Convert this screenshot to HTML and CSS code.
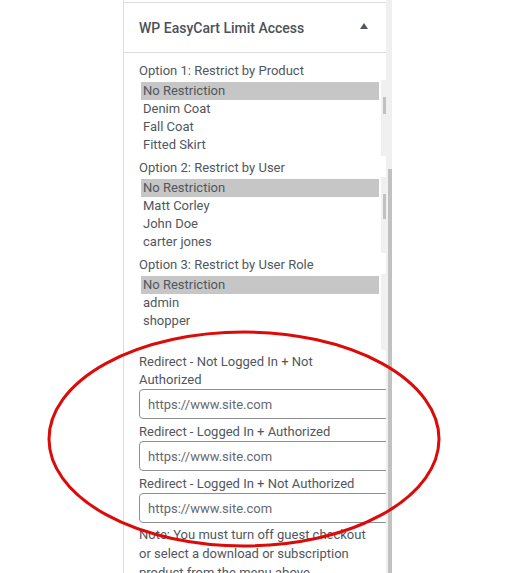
FILE: index.html
```html
<!DOCTYPE html>
<html lang="en">
<head>
<meta charset="utf-8">
<title>WP EasyCart Limit Access</title>
<link rel="stylesheet" href="styles.css">
</head>
<body>
<div class="page">
  <div class="gutter"></div>
  <section class="metabox">
    <header class="metabox-head">
      <h2 class="metabox-title">WP EasyCart Limit Access</h2>
      <span class="toggle-arrow"></span>
    </header>
    <div class="metabox-body">
      <div class="field-label">Option 1: Restrict by Product</div>
      <div class="listbox">
        <ul class="options">
          <li class="selected">No Restriction</li>
          <li>Denim Coat</li>
          <li>Fall Coat</li>
          <li>Fitted Skirt</li>
        </ul>
        <div class="track"><div class="thumb thumb-product"></div></div>
      </div>

      <div class="field-label">Option 2: Restrict by User</div>
      <div class="listbox">
        <ul class="options">
          <li class="selected">No Restriction</li>
          <li>Matt Corley</li>
          <li>John Doe</li>
          <li>carter jones</li>
        </ul>
        <div class="track"><div class="thumb thumb-user"></div></div>
      </div>

      <div class="field-label">Option 3: Restrict by User Role</div>
      <div class="listbox">
        <ul class="options">
          <li class="selected">No Restriction</li>
          <li>admin</li>
          <li>shopper</li>
        </ul>
        <div class="track"></div>
      </div>

      <div class="redirect-label first">Redirect - Not Logged In + Not Authorized</div>
      <input class="url-input" type="text" placeholder="https://www.site.com">
      <div class="redirect-label">Redirect - Logged In + Authorized</div>
      <input class="url-input" type="text" placeholder="https://www.site.com">
      <div class="redirect-label">Redirect - Logged In + Not Authorized</div>
      <input class="url-input" type="text" placeholder="https://www.site.com">
      <p class="note">Note: You must turn off guest checkout or select a download or subscription product from the menu above.</p>
    </div>
  </section>
  <div class="page-scroll"><div class="page-thumb"></div></div>
</div>
<svg class="annotation" width="520" height="573" viewBox="0 0 520 573" aria-hidden="true">
  <ellipse cx="244" cy="439" rx="195" ry="107" fill="none" stroke="#dd0a0a" stroke-width="3"/>
</svg>
</body>
</html>
```

FILE: styles.css
```css
html, body {
  margin: 0;
  padding: 0;
  background: #ffffff;
}

body {
  font-family: Roboto, "Open Sans", "Liberation Sans", sans-serif;
  font-size: 13px;
  color: #50575e;
  width: 520px;
  height: 573px;
  overflow: hidden;
  position: relative;
}

.page {
  display: flex;
  height: 573px;
}

.gutter {
  width: 123px;
  flex: none;
}

.metabox {
  width: 262px;
  flex: none;
  border-left: 1px solid #dcdcde;
  overflow: hidden;
  background: #ffffff;
}

.metabox-head {
  margin-top: 2px;
  height: 49px;
  border-top: 1px solid #dcdcde;
  border-bottom: 1px solid #dcdcde;
  display: flex;
  align-items: center;
  justify-content: space-between;
  padding-left: 15px;
  padding-right: 18px;
}

.metabox-title {
  margin: 0;
  font-size: 14px;
  font-weight: 500;
  color: #4b5259;
  line-height: 20px;
}

.toggle-arrow {
  width: 0;
  height: 0;
  border-left: 4px solid transparent;
  border-right: 4px solid transparent;
  border-bottom: 6px solid #50575e;
  margin-bottom: 3px;
}

.metabox-body {
  padding: 7px 0 0 15px;
}

.field-label {
  line-height: 22px;
  height: 20px;
  white-space: nowrap;
}

.listbox {
  display: flex;
  height: 76px;
  margin-bottom: 1px;
}

.options {
  list-style: none;
  margin: 0;
  padding: 2px;
  flex: 1;
}

.options li {
  height: 18px;
  line-height: 18px;
  padding-left: 2px;
  white-space: nowrap;
}

.options li.selected {
  background: #c6c6c6;
}

.track {
  width: 5px;
  flex: none;
  background: #f0f0f0;
}

.thumb {
  margin-left: 2px;
  width: 3px;
  background: #c1c1c1;
}

.thumb-product {
  margin-top: 17px;
  height: 17px;
}

.thumb-user {
  margin-top: 17px;
  height: 25px;
}

.redirect-label {
  line-height: 18px;
  margin: 4px 0 0;
  padding-right: 14px;
}

.redirect-label.first {
  margin-top: 3px;
  margin-bottom: 0;
}

.url-input {
  display: block;
  width: 270px;
  height: 30px;
  box-sizing: border-box;
  border: 1px solid #8c8f94;
  border-radius: 4px;
  padding: 0 8px;
  margin: 0;
  font-family: inherit;
  font-size: 13px;
  color: #2c3338;
  background: #ffffff;
}

.url-input::placeholder {
  color: #646970;
  opacity: 1;
}

.note {
  margin: 2px 0 0;
  line-height: 19px;
  padding-right: 14px;
}

.page-scroll {
  width: 6px;
  flex: none;
  background: #f0f0f0;
  display: flex;
  flex-direction: column;
  align-items: flex-end;
}

.page-thumb {
  margin-top: 169px;
  width: 4px;
  flex: 1;
  background: #c1c1c1;
}

.annotation {
  position: absolute;
  left: 0;
  top: 0;
  pointer-events: none;
}
```
